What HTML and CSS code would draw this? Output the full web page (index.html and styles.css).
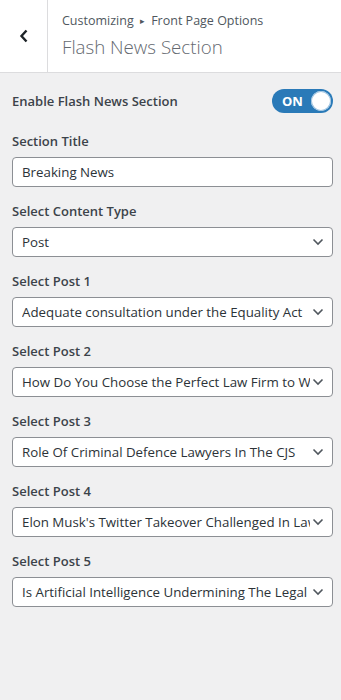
FILE: index.html
```html
<!DOCTYPE html>
<html lang="en">
<head>
    <meta charset="UTF-8">
    <meta name="viewport" content="width=device-width, initial-scale=1.0">
    <title>Flash News Section</title>
    <link rel="stylesheet" href="styles.css">
</head>
<body>
    <div class="header">
        <div class="backBtn">
            <svg width="10" height="14" viewBox="0 0 10 14"><polyline points="7.5,1.5 2.5,7 7.5,12.5" fill="none" stroke="#1d2327" stroke-width="2.4"/></svg>
        </div>
        <div class="titleBox">
            <div class="crumb">Customizing <span class="arrow">&#9656;</span> Front Page Options</div>
            <h1>Flash News Section</h1>
        </div>
    </div>

    <div class="panel">
        <div class="toggleRow">
            <span class="label">Enable Flash News Section</span>
            <div class="toggle">
                <span>ON</span>
                <div class="knob"></div>
            </div>
        </div>

        <div class="control">
            <div class="label">Section Title</div>
            <div class="field">Breaking News</div>
        </div>

        <div class="control">
            <div class="label">Select Content Type</div>
            <div class="field select"><span class="value">Post</span><svg class="chev" width="12" height="8" viewBox="0 0 12 8"><polyline points="1.5,1.5 6,6 10.5,1.5" fill="none" stroke="#50575e" stroke-width="1.6"/></svg></div>
        </div>

        <div class="control">
            <div class="label">Select Post 1</div>
            <div class="field select"><span class="value">Adequate consultation under the Equality Act</span><svg class="chev" width="12" height="8" viewBox="0 0 12 8"><polyline points="1.5,1.5 6,6 10.5,1.5" fill="none" stroke="#50575e" stroke-width="1.6"/></svg></div>
        </div>

        <div class="control">
            <div class="label">Select Post 2</div>
            <div class="field select"><span class="value">How Do You Choose the Perfect Law Firm to Work With</span><svg class="chev" width="12" height="8" viewBox="0 0 12 8"><polyline points="1.5,1.5 6,6 10.5,1.5" fill="none" stroke="#50575e" stroke-width="1.6"/></svg></div>
        </div>

        <div class="control">
            <div class="label">Select Post 3</div>
            <div class="field select"><span class="value">Role Of Criminal Defence Lawyers In The CJS</span><svg class="chev" width="12" height="8" viewBox="0 0 12 8"><polyline points="1.5,1.5 6,6 10.5,1.5" fill="none" stroke="#50575e" stroke-width="1.6"/></svg></div>
        </div>

        <div class="control">
            <div class="label">Select Post 4</div>
            <div class="field select"><span class="value">Elon Musk's Twitter Takeover Challenged In Lawsuit</span><svg class="chev" width="12" height="8" viewBox="0 0 12 8"><polyline points="1.5,1.5 6,6 10.5,1.5" fill="none" stroke="#50575e" stroke-width="1.6"/></svg></div>
        </div>

        <div class="control">
            <div class="label">Select Post 5</div>
            <div class="field select"><span class="value">Is Artificial Intelligence Undermining The Legal Profession</span><svg class="chev" width="12" height="8" viewBox="0 0 12 8"><polyline points="1.5,1.5 6,6 10.5,1.5" fill="none" stroke="#50575e" stroke-width="1.6"/></svg></div>
        </div>
    </div>
</body>
</html>
```

FILE: styles.css
```css
body{
    margin: 0;
    background-color: #f0f0f1;
    font-family: "Open Sans", "Noto Sans", sans-serif;
    color: #3c434a;
}
.header{
    display: flex;
    height: 72px;
    background-color: #fff;
    border-bottom: 1px solid #dcdcde;
}
.backBtn{
    width: 47px;
    border-right: 1px solid #dcdcde;
    display: flex;
    align-items: center;
    justify-content: center;
}
.titleBox{
    padding: 12px 0 0 14px;
}
.crumb{
    font-size: 12.5px;
    line-height: 18px;
    color: #50575e;
}
.crumb .arrow{
    font-size: 9px;
    vertical-align: 1px;
    margin: 0 3px;
}
h1{
    margin: 5px 0 0;
    font-size: 18.7px;
    font-weight: 300;
    line-height: 24px;
    color: #646970;
}
.panel{
    padding: 16px 8px 0 12px;
}
.toggleRow{
    display: flex;
    align-items: center;
    justify-content: space-between;
    height: 24px;
    margin-bottom: 18px;
}
.label{
    font-size: 13px;
    font-weight: 600;
    line-height: 20px;
    color: #3c434a;
}
.toggle{
    width: 61px;
    height: 24px;
    box-sizing: border-box;
    border-radius: 12px;
    background-color: #2a7ab8;
    display: flex;
    align-items: center;
    justify-content: space-between;
    padding: 0 2px 0 10px;
}
.toggle span{
    color: #fff;
    font-size: 13px;
    font-weight: 700;
}
.knob{
    width: 20px;
    height: 20px;
    border-radius: 50%;
    background-color: #fff;
    box-shadow: inset 0 0 0 1px #9cc2e0;
}
.control{
    margin-bottom: 14px;
}
.control .label{
    margin-bottom: 6px;
}
.field{
    height: 30px;
    box-sizing: border-box;
    background-color: #fff;
    border: 1px solid #8c8f94;
    border-radius: 4px;
    padding: 0 9px;
    font-size: 13.3px;
    line-height: 28px;
    color: #2c3338;
    white-space: nowrap;
}
.select{
    display: flex;
    align-items: center;
    padding-right: 8px;
}
.select .value{
    flex: 1;
    overflow: hidden;
}
.chev{
    margin-left: 2px;
    flex-shrink: 0;
}
```
